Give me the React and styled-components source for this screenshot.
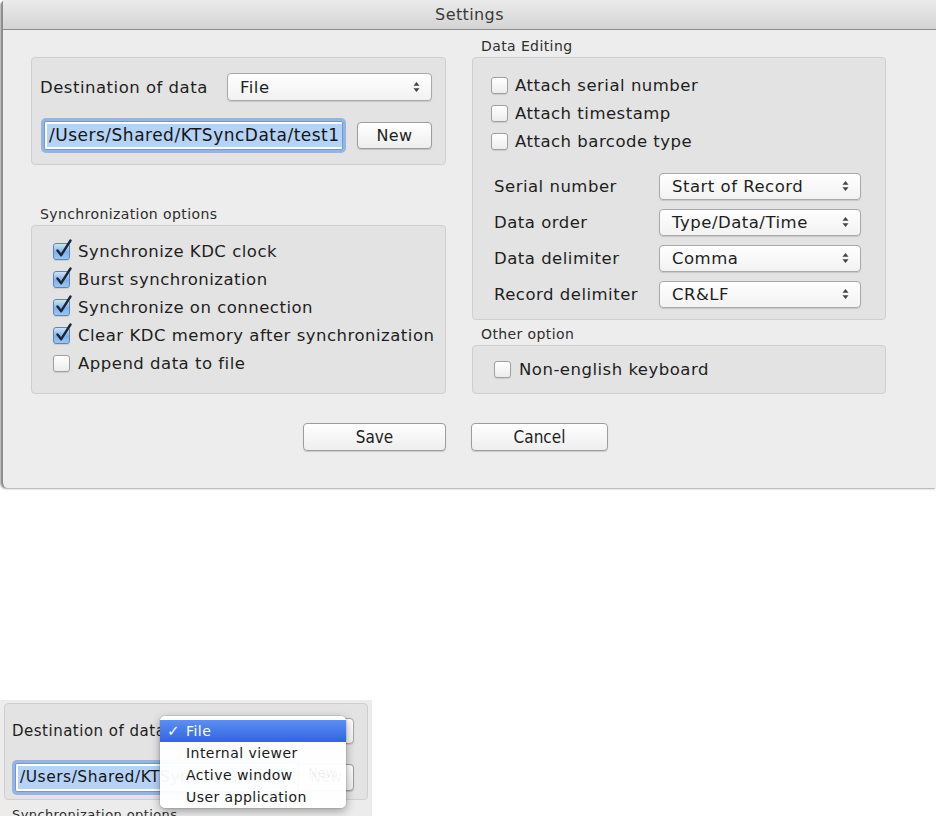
import React from 'react';
import styled, { createGlobalStyle } from 'styled-components';

const GlobalStyle = createGlobalStyle`
  body {
    margin: 0;
    background: #ffffff;
    font-family: "DejaVu Sans", "Liberation Sans", sans-serif;
    color: #1e1e1e;
  }
`;

const Page = styled.div`
  width: 936px;
  height: 816px;
  display: flex;
  flex-direction: column;
  overflow: hidden;
  background: #ffffff;
`;

const Window = styled.div`
  height: 488px;
  box-sizing: border-box;
  margin-left: 1px;
  background: #ededed;
  border-left: 2px solid #8e8e8e;
  border-bottom-left-radius: 6px;
  border-top-left-radius: 5px;
  box-shadow: -1px 1px 2px rgba(0, 0, 0, 0.35);
  display: flex;
  flex-direction: column;
`;

const TitleBar = styled.div`
  height: 29px;
  flex-shrink: 0;
  background: linear-gradient(#ebebeb, #d4d4d4);
  border-bottom: 1px solid #8c8c8c;
  display: flex;
  align-items: center;
  justify-content: center;
  font-size: 16px;
  letter-spacing: 0.4px;
  color: #3a3a3a;
`;

const Content = styled.div`
  display: flex;
  gap: 26px;
  padding: 9px 0 0 28px;
`;

const Column = styled.div`
  width: ${p => p.$width}px;
  display: flex;
  flex-direction: column;
`;

const SectionLabel = styled.div`
  height: 16px;
  line-height: 14px;
  margin-top: ${p => p.$top || 0}px;
  margin-bottom: 2px;
  padding-left: 9px;
  font-size: 14px;
  letter-spacing: 0.4px;
  color: #2e2e2e;
  white-space: nowrap;
`;

const Group = styled.div`
  height: ${p => p.$height}px;
  margin-top: ${p => p.$top || 0}px;
  box-sizing: border-box;
  background: #e3e3e3;
  border: 1px solid #cfcfcf;
  border-radius: 4px;
  padding: ${p => p.$pad || '0'};
  display: flex;
  flex-direction: column;
  align-items: ${p => (p.$center ? 'flex-start' : 'stretch')};
  justify-content: ${p => (p.$center ? 'center' : 'flex-start')};
`;

const Row = styled.div`
  display: flex;
  align-items: center;
  justify-content: space-between;
  height: ${p => p.$height}px;
  margin-top: ${p => p.$top || 0}px;
  padding-left: ${p => p.$indent || 0}px;
`;

const FieldLabel = styled.span`
  font-size: ${p => p.$size || 16.5}px;
  letter-spacing: 0.5px;
  color: #1e1e1e;
  white-space: nowrap;
`;

const SelectBox = styled.div`
  position: relative;
  width: ${p => p.$width}px;
  height: ${p => p.$height || 27}px;
  box-sizing: border-box;
  background: linear-gradient(#ffffff, #f2f2f2);
  border: 1px solid #a9a9a9;
  border-radius: 4px;
  box-shadow: 0 1px 1px rgba(0, 0, 0, 0.12);
  display: flex;
  align-items: center;
  padding-left: 12px;
  font-size: ${p => p.$size || 16.5}px;
  letter-spacing: 0.5px;
  color: #1e1e1e;
  white-space: nowrap;
  overflow: hidden;
`;

const ArrowWrap = styled.span`
  position: absolute;
  right: 11px;
  top: 50%;
  transform: translateY(-50%);
  display: flex;
`;

const Arrows = () => (
  <ArrowWrap>
    <svg width="7" height="11" viewBox="0 0 7 11">
      <path d="M0.5 4.2 L3.5 0.5 L6.5 4.2 Z" fill="#444" />
      <path d="M0.5 6.8 L3.5 10.5 L6.5 6.8 Z" fill="#444" />
    </svg>
  </ArrowWrap>
);

const Select = ({ value, width, height, size }) => (
  <SelectBox $width={width} $height={height} $size={size}>
    {value}
    <Arrows />
  </SelectBox>
);

const TextField = styled.div`
  width: ${p => p.$width}px;
  height: ${p => p.$height || 29}px;
  box-sizing: border-box;
  background: #ffffff;
  border: 1px solid #6d9bd6;
  box-shadow: 0 0 0 3px rgba(115, 160, 225, 0.7);
  border-radius: 2px;
  display: flex;
  align-items: center;
  padding: 0 2px;
  overflow: hidden;
`;

const Selected = styled.span`
  background: #b5d3f6;
  font-size: ${p => p.$size || 17}px;
  letter-spacing: 0.5px;
  line-height: 23px;
  padding: 0 2px;
  white-space: nowrap;
  color: #151515;
`;

const PushButton = styled.button`
  width: ${p => p.$width}px;
  height: ${p => p.$height || 28}px;
  box-sizing: border-box;
  background: linear-gradient(#ffffff, #eeeeee);
  border: 1px solid #9d9d9d;
  border-radius: 4px;
  box-shadow: 0 1px 1px rgba(0, 0, 0, 0.15);
  font-family: ${p => (p.$narrow ? '"DejaVu Sans Condensed", "DejaVu Sans", sans-serif' : '"DejaVu Sans", sans-serif')};
  font-size: ${p => p.$size || 16}px;
  letter-spacing: ${p => (p.$narrow ? 0 : 0.4)}px;
  color: #1e1e1e;
  padding: 0;
  cursor: default;
`;

const CheckRow = styled.label`
  display: flex;
  align-items: center;
  gap: ${p => p.$gap || 8}px;
  height: 28px;
  font-size: 16.5px;
  letter-spacing: 0.5px;
  color: #1e1e1e;
  white-space: nowrap;
`;

const Box = styled.span`
  position: relative;
  width: 17px;
  height: 17px;
  box-sizing: border-box;
  flex-shrink: 0;
  border-radius: 3px;
  border: 1px solid ${p => (p.$checked ? '#5a86bd' : '#a0a0a0')};
  background: ${p =>
    p.$checked
      ? 'linear-gradient(#cfe3f8, #7fb2ea 55%, #9cc6f2)'
      : 'linear-gradient(#ffffff, #ececec)'};
  box-shadow: 0 1px 1px rgba(0, 0, 0, 0.1);
`;

const Tick = styled.svg`
  position: absolute;
  left: 1px;
  top: -5px;
`;

const Check = ({ checked, children, gap }) => (
  <CheckRow $gap={gap}>
    <Box $checked={checked}>
      {checked && (
        <Tick width="18" height="20" viewBox="0 0 18 20">
          <path
            d="M2.5 11.5 L6.2 16.2 L15.5 1.5"
            fill="none"
            stroke="#1b2638"
            strokeWidth="2.4"
            strokeLinecap="round"
            strokeLinejoin="round"
          />
        </Tick>
      )}
    </Box>
    {children}
  </CheckRow>
);

const OptionGrid = styled.div`
  display: grid;
  grid-template-columns: 165px 202px;
  grid-auto-rows: 36px;
  align-items: center;
  margin-top: 13px;
  padding-left: 3px;
`;

const ButtonRow = styled.div`
  display: flex;
  gap: 25px;
  padding: 29px 0 0 300px;
`;

/* cropped copy of the destination popup, open */

const Snippet = styled.div`
  position: relative;
  margin-top: 212px;
  width: 372px;
  height: 116px;
  background: #ececec;
  overflow: hidden;
`;

const SnippetGroup = styled.div`
  margin: 3px 0 0 4px;
  width: 364px;
  height: 97px;
  box-sizing: border-box;
  background: #e3e3e3;
  border: 1px solid #cfcfcf;
  border-radius: 4px;
  padding: 14px 13px 0 7px;
`;

const CutLabel = styled.div`
  padding: 7px 0 0 12px;
  font-size: 13px;
  letter-spacing: 0.4px;
  color: #2e2e2e;
  white-space: nowrap;
`;

const Menu = styled.div`
  position: absolute;
  left: 160px;
  top: 16px;
  width: 186px;
  height: 92px;
  box-sizing: border-box;
  padding-top: 4px;
  background: rgba(255, 255, 255, 0.96);
  border-radius: 5px;
  box-shadow: 0 3px 10px rgba(0, 0, 0, 0.35), 0 0 0 1px rgba(0, 0, 0, 0.08);
`;

const MenuItem = styled.div`
  position: relative;
  height: 22px;
  display: flex;
  align-items: center;
  padding-left: 26px;
  font-size: 14px;
  letter-spacing: 0.45px;
  color: ${p => (p.$active ? '#ffffff' : '#1a1a1a')};
  background: ${p => (p.$active ? 'linear-gradient(#5d8ff2, #2f64e3)' : 'transparent')};
`;

const MenuTick = styled.span`
  position: absolute;
  left: 7px;
  font-size: 15px;
`;

const GhostNew = styled.span`
  position: absolute;
  left: 148px;
  top: 49px;
  font-size: 13px;
  color: rgba(0, 0, 0, 0.07);
`;

export default function App() {
  return (
    <Page>
      <GlobalStyle />
      <Window>
        <TitleBar>Settings</TitleBar>
        <Content>
          <Column $width={415}>
            <Group $height={108} $top={18} $pad="15px 13px 0 8px">
              <Row $height={28}>
                <FieldLabel>Destination of data</FieldLabel>
                <Select value="File" width={205} height={28} />
              </Row>
              <Row $height={31} $top={19} $indent={4}>
                <TextField $width={299}>
                  <Selected>/Users/Shared/KTSyncData/test1</Selected>
                </TextField>
                <PushButton $width={75} $height={27}>New</PushButton>
              </Row>
            </Group>
            <SectionLabel $top={42}>Synchronization options</SectionLabel>
            <Group $height={169} $pad="11px 0 0 21px">
              <Check checked>Synchronize KDC clock</Check>
              <Check checked>Burst synchronization</Check>
              <Check checked>Synchronize on connection</Check>
              <Check checked>Clear KDC memory after synchronization</Check>
              <Check>Append data to file</Check>
            </Group>
          </Column>
          <Column $width={414}>
            <SectionLabel>Data Editing</SectionLabel>
            <Group $height={263} $pad="13px 0 0 18px">
              <Check gap={7}>Attach serial number</Check>
              <Check gap={7}>Attach timestamp</Check>
              <Check gap={7}>Attach barcode type</Check>
              <OptionGrid>
                <FieldLabel>Serial number</FieldLabel>
                <Select value="Start of Record" width={202} />
                <FieldLabel>Data order</FieldLabel>
                <Select value="Type/Data/Time" width={202} />
                <FieldLabel>Data delimiter</FieldLabel>
                <Select value="Comma" width={202} />
                <FieldLabel>Record delimiter</FieldLabel>
                <Select value="CR&LF" width={202} />
              </OptionGrid>
            </Group>
            <SectionLabel $top={7}>Other option</SectionLabel>
            <Group $height={49} $pad="0 0 0 21px" $center>
              <Check>Non-english keyboard</Check>
            </Group>
          </Column>
        </Content>
        <ButtonRow>
          <PushButton $width={143} $narrow $size={17}>Save</PushButton>
          <PushButton $width={137} $narrow $size={17}>Cancel</PushButton>
        </ButtonRow>
      </Window>

      <Snippet>
        <SnippetGroup>
          <Row $height={26}>
            <FieldLabel $size={15}>Destination of data</FieldLabel>
            <Select value="File" width={193} height={26} size={14} />
          </Row>
          <Row $height={30} $top={18} $indent={3}>
            <TextField $width={285} $height={29}>
              <Selected $size={15.5}>/Users/Shared/KTSyncData/test1</Selected>
            </TextField>
            <PushButton $width={56} $height={27} $size={14}>New</PushButton>
          </Row>
        </SnippetGroup>
        <CutLabel>Synchronization options</CutLabel>
        <Menu>
          <MenuItem $active>
            <MenuTick>✓</MenuTick>File
          </MenuItem>
          <MenuItem>Internal viewer</MenuItem>
          <MenuItem>Active window</MenuItem>
          <MenuItem>User application</MenuItem>
          <GhostNew>New</GhostNew>
        </Menu>
      </Snippet>
    </Page>
  );
}
